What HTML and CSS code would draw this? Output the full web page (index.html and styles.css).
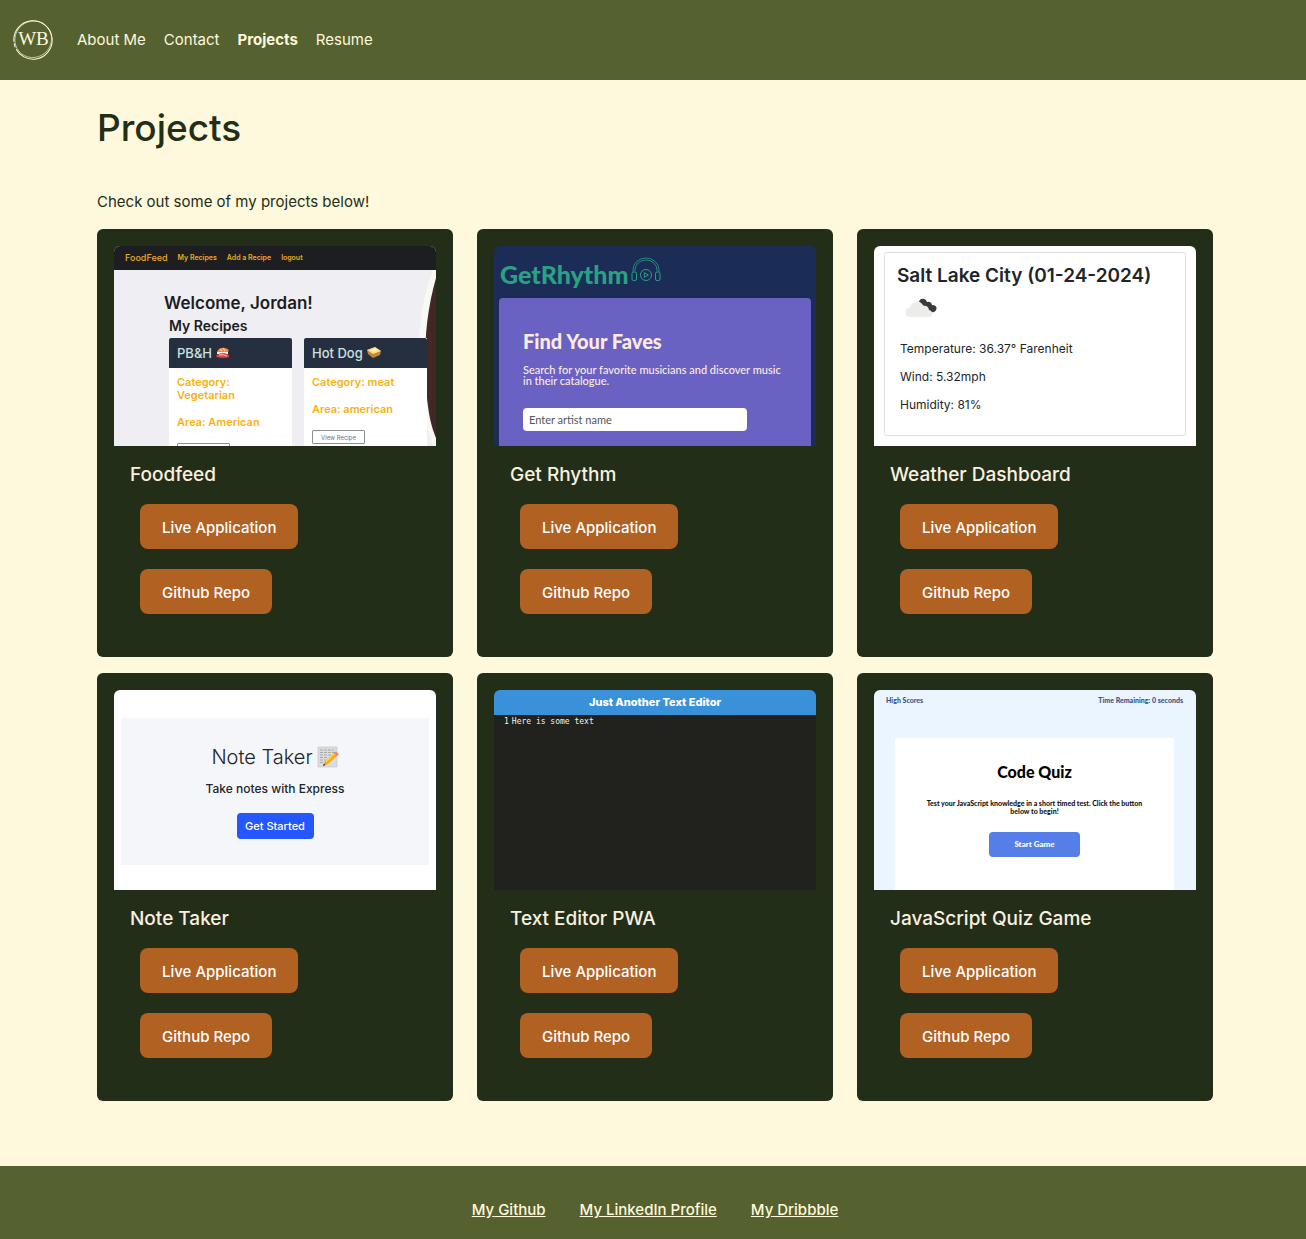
FILE: index.html
```html
<!DOCTYPE html>
<html lang="en">
<head>
<meta charset="utf-8">
<meta name="viewport" content="width=device-width, initial-scale=1">
<title>Projects</title>
<link rel="stylesheet" href="styles.css">
</head>
<body>
<header class="navbar">
  <a class="brand" href="#" aria-label="Home">
    <svg class="logo" viewBox="0 0 40 40" fill="none" stroke="currentColor">
      <circle cx="20" cy="20" r="19.2" stroke-width="1" stroke-dasharray="112 2 4 3" transform="rotate(175 20 20)"/>
      <ellipse cx="20.6" cy="19.6" rx="18.6" ry="18" stroke-width=".6" transform="rotate(-40 20 20)"/>
      <text x="20.500" y="25" text-anchor="middle" fill="currentColor" stroke="none" class="logo-text">WB</text>
    </svg>
  </a>
  <nav class="nav">
    <a href="#about">About Me</a>
    <a href="#contact">Contact</a>
    <a href="#projects" class="active">Projects</a>
    <a href="#resume">Resume</a>
  </nav>
</header>

<main class="container">
  <h1>Projects</h1>
  <p class="intro">Check out some of my projects below!</p>
  <div class="grid">

    <article class="card">
      <div class="shot food">
        <div class="food-nav"><b>FoodFeed</b><span>My Recipes</span><span>Add a Recipe</span><span>logout</span></div>
        <div class="food-page">
          <svg class="food-cup" viewBox="0 0 40 176" preserveAspectRatio="none">
            <path d="M34 0C8 32 2 72 8 112C14 146 24 164 36 176H40V0Z" fill="#f8f9f4"/>
            <path d="M40 8C24 36 17 64 18 100C22 142 30 156 40 168Z" fill="#432724"/>
          </svg>
          <div class="food-title">Welcome, Jordan!</div>
          <div class="food-sub">My Recipes</div>
          <div class="food-cards">
            <div class="recipe">
              <div class="recipe-head">PB&amp;H
                <svg viewBox="0 0 14 12"><path d="M1 5Q3 0 9 1Q14 2 12 5Z" fill="#f08a4a"/><path d="M4 2l2 2M7 1l2 3" stroke="#ffd9b8"/><path d="M1 5h11v2H1z" fill="#f4eee8"/><path d="M0 9Q2 6 8 6Q14 7 13 10Q7 12 1 10Z" fill="#e0434b"/><path d="M3 8q5-1 8 1" stroke="#ffc4bd" fill="none"/></svg>
              </div>
              <div class="recipe-body"><p>Category:<br>Vegetarian</p><p>Area: American</p><button type="button" aria-label="View Recipe"></button></div>
            </div>
            <div class="recipe">
              <div class="recipe-head">Hot Dog
                <svg viewBox="0 0 14 12"><path d="M0 3L8 0L14 4L13 8L6 11L1 7Z" fill="#c98532"/><path d="M0 3L8 0L14 4L6 7Z" fill="#f7dc8b"/><path d="M3 3l5-2 3 2-5 2z" fill="#fff2b4"/></svg>
              </div>
              <div class="recipe-body"><p>Category: meat</p><p>Area: american</p><button type="button">View Recipe</button></div>
            </div>
          </div>
        </div>
      </div>
      <div class="card-body">
        <h2>Foodfeed</h2>
        <a class="btn" href="#">Live Application</a>
        <a class="btn" href="#">Github Repo</a>
      </div>
    </article>

    <article class="card">
      <div class="shot rhythm">
        <div class="rhythm-logo">GetRhythm
          <svg viewBox="0 0 30 30" fill="none" stroke="currentColor">
            <path d="M2 15V13A13 12 0 0 1 28 13V15M4 14V13A11 10 0 0 1 26 13V14" stroke-width=".8"/>
            <rect x="1" y="15" width="4.500" height="8.500" rx="1.500"/><rect x="24.500" y="15" width="4.500" height="8.500" rx="1.500"/>
            <circle cx="15" cy="18" r="5.500"/><path d="M13.300 15.700L17.500 18L13.300 20.300Z"/>
          </svg>
        </div>
        <div class="rhythm-panel">
          <div class="rhythm-title">Find Your Faves</div>
          <p>Search for your favorite musicians and discover music in their catalogue.</p>
          <input type="text" placeholder="Enter artist name" aria-label="Artist name">
        </div>
      </div>
      <div class="card-body">
        <h2>Get Rhythm</h2>
        <a class="btn" href="#">Live Application</a>
        <a class="btn" href="#">Github Repo</a>
      </div>
    </article>

    <article class="card">
      <div class="shot weather">
        <div class="weather-box">
          <div class="weather-title">Salt Lake City (01-24-2024)</div>
          <svg viewBox="0 0 32 20"><path d="M14 4Q15 0 19 1Q21 1 22 4Q26 3 27 7Q32 7 31.500 11Q30 15 26 14L19 8Z" fill="#3b3b3c"/><path d="M5 19Q0 18 .5 14Q1 10 5 10Q6 4 11 4Q16 3 18 8Q23 7 24 12Q28 13 27 17Q26 19 24 19Z" fill="#ececeb"/></svg>
          <p>Temperature: 36.37° Farenheit</p>
          <p>Wind: 5.32mph</p>
          <p>Humidity: 81%</p>
        </div>
      </div>
      <div class="card-body">
        <h2>Weather Dashboard</h2>
        <a class="btn" href="#">Live Application</a>
        <a class="btn" href="#">Github Repo</a>
      </div>
    </article>

    <article class="card">
      <div class="shot notes">
        <div class="notes-box">
          <div class="notes-title">Note Taker
            <svg viewBox="0 0 22 22"><path d="M1 1H20V21H1Z" fill="#dcdcdc" stroke="#c4c4c4" stroke-width=".6"/><path d="M3 4h14M3 6.500h15M3 9h11M3 11.500h8M3 14h6M3 16.500h4" stroke="#9a9a9a" stroke-width=".8" stroke-dasharray="3 1"/><path d="M6 20L8 15L17 7L20 10L11 18Z" fill="#f2ac1d"/><path d="M8 15L17 7L18 8L9.500 16Z" fill="#ffd34d"/><path d="M17 7L19 5.500L22 8.500L20 10Z" fill="#ee7f8c"/><path d="M6 20L7 17.500L8.500 19Z" fill="#333"/></svg>
          </div>
          <p>Take notes with Express</p>
          <button type="button">Get Started</button>
        </div>
      </div>
      <div class="card-body">
        <h2>Note Taker</h2>
        <a class="btn" href="#">Live Application</a>
        <a class="btn" href="#">Github Repo</a>
      </div>
    </article>

    <article class="card">
      <div class="shot editor">
        <div class="editor-bar">Just Another Text Editor</div>
        <div class="editor-line"><span>1</span><code>Here is some text</code></div>
      </div>
      <div class="card-body">
        <h2>Text Editor PWA</h2>
        <a class="btn" href="#">Live Application</a>
        <a class="btn" href="#">Github Repo</a>
      </div>
    </article>

    <article class="card">
      <div class="shot quiz">
        <div class="quiz-top"><span>High Scores</span><span>Time Remaining: 0 seconds</span></div>
        <div class="quiz-box">
          <div class="quiz-title">Code Quiz</div>
          <p>Test your JavaScript knowledge in a short timed test. Click the button below to begin!</p>
          <button type="button">Start Game</button>
        </div>
      </div>
      <div class="card-body">
        <h2>JavaScript Quiz Game</h2>
        <a class="btn" href="#">Live Application</a>
        <a class="btn" href="#">Github Repo</a>
      </div>
    </article>

  </div>
</main>

<footer class="footer">
  <a href="#">My Github</a>
  <a href="#">My LinkedIn Profile</a>
  <a href="#">My Dribbble</a>
</footer>
</body>
</html>
```

FILE: styles.css
```css
*, *::before, *::after { box-sizing: border-box; }

:root {
  --cream: #fef8dc;
  --olive: #55612f;
  --forest: #232e18;
  --rust: #b16122;
}

body {
  margin: 0;
  min-height: 100vh;
  display: flex;
  flex-direction: column;
  background: var(--cream);
  color: var(--forest);
  font: 400 15px/24px Inter, "Liberation Sans", sans-serif;
}

p { margin: 0; }
a { color: inherit; }

/* Top bar */
.navbar {
  display: flex;
  align-items: center;
  gap: 24px;
  height: 80px;
  padding: 0 13px 1px;
  background: var(--olive);
  color: var(--cream);
}
.brand { display: flex; }
.logo { width: 40px; height: 40px; }
.logo-text { font: 400 19px "Liberation Serif", serif; }
.nav { display: flex; gap: 18px; }
.nav a { text-decoration: none; }
.nav .active { font-weight: 700; }

/* Page */
.container {
  flex: 1;
  width: 100%;
  max-width: 1144px;
  margin: 0 auto;
  padding: 24px 12px 64px 16px;
}
h1 {
  margin: 0 0 38px;
  font-size: 37px;
  line-height: 48px;
  font-weight: 500;
}
.intro { margin: 0 0 15px; }
.grid {
  display: grid;
  grid-template-columns: repeat(auto-fill, minmax(320px, 1fr));
  gap: 16px 24px;
}

/* Project card */
.card {
  padding: 17px;
  border-radius: 6px;
  background: var(--forest);
  color: #faf0e0;
}
.card-body {
  display: flex;
  flex-direction: column;
  align-items: flex-start;
  gap: 20px;
  padding: 17px 16px 26px;
}
.card-body h2 {
  margin: 0 0 -3px;
  font-size: 19px;
  line-height: 24px;
  font-weight: 500;
}
.btn {
  margin-left: 10px;
  padding: 11px 22px 9px;
  border-radius: 8px;
  background: var(--rust);
  color: #fff;
  font-weight: 500;
  line-height: 25px;
  text-decoration: none;
}

/* Footer */
.footer {
  display: flex;
  justify-content: center;
  flex-wrap: wrap;
  gap: 34px;
  padding: 32px 0 17px 4px;
  background: var(--olive);
  color: var(--cream);
  font-weight: 500;
}

/* Project previews */
.shot {
  height: 200px;
  overflow: hidden;
  border-radius: 6px 6px 0 0;
}
.shot button, .shot input { font-family: inherit; }

/* FoodFeed */
.food { background: #efeef3; color: #1c1d22; }
.food-nav {
  display: flex;
  align-items: center;
  height: 24px;
  padding-left: 11px;
  gap: 10px;
  background: #1d1e22;
  color: #efa91c;
  font-size: 7px;
  font-weight: 600;
}
.food-nav b { font-size: 9px; font-weight: 500; }
.food-page { position: relative; padding: 22px 9px 0 50px; }
.food-cup { position: absolute; right: 0; top: 0; width: 20px; height: 176px; }
.food-title { font-size: 17px; font-weight: 600; line-height: 22px; }
.food-sub { padding-left: 5px; font-size: 14px; font-weight: 600; line-height: 24px; }
.food-cards {
  position: relative;
  display: grid;
  grid-template-columns: 1fr 1fr;
  gap: 12px;
  padding-left: 5px;
}
.recipe { background: #fff; }
.recipe-head {
  display: flex;
  align-items: center;
  gap: 4px;
  height: 30px;
  padding-left: 8px;
  border-radius: 2px 2px 0 0;
  background: #262f3f;
  color: #cfe0e0;
  font-size: 13px;
  font-weight: 500;
}
.recipe-head svg { width: 14px; height: 12px; }
.recipe-body {
  padding: 8px 8px 0;
  color: #f9b110;
  font-size: 11px;
  font-weight: 600;
  line-height: 13px;
}
.recipe-body p { margin-bottom: 14px; }
.recipe-body button {
  display: block;
  width: 53px;
  height: 14px;
  padding: 0;
  border: 1px solid #8b8f94;
  border-radius: 1px;
  background: #fff;
  color: #6c7278;
  font-size: 6px;
}

/* Get Rhythm */
.rhythm {
  padding: 11px 5px 0;
  background: #1b2c56;
  font-family: Lato, sans-serif;
}
.rhythm-logo {
  display: flex;
  align-items: center;
  gap: 2px;
  height: 41px;
  padding: 0 0 8px 1px;
  color: #2aa183;
  font-size: 25px;
  font-weight: 900;
}
.rhythm-logo svg { width: 30px; height: 30px; margin-bottom: 4px; }
.rhythm-panel {
  height: 160px;
  padding: 31px 24px 0;
  border-radius: 4px;
  background: #6a62c3;
  color: #fdeade;
}
.rhythm-title { font-size: 20px; font-weight: 900; line-height: 24px; }
.rhythm-panel p { margin: 11px 0 22px; font-size: 11px; font-weight: 500; line-height: 11px; }
.rhythm-panel input {
  display: block;
  width: 85%;
  height: 23px;
  padding: 0 6px;
  border: 0;
  border-radius: 4px;
  background: #fff;
  font-size: 11px;
}
.rhythm-panel input::placeholder { color: #555; }

/* Weather */
.weather { padding: 6px 10px 10px; background: #fff; color: #212529; }
.weather-box {
  height: 100%;
  padding: 10px 12px;
  border: 1px solid #dedfe0;
  border-radius: 3px;
}
.weather-title { font-size: 19px; font-weight: 600; line-height: 26px; white-space: nowrap; }
.weather-box svg { display: block; width: 32px; height: 20px; margin: 9px 0 17px 8px; }
.weather-box p { padding-left: 3px; font-size: 12px; line-height: 28px; }

/* Note Taker */
.notes { padding: 28px 7px; background: #fff; color: #212529; }
.notes-box {
  display: flex;
  flex-direction: column;
  align-items: center;
  height: 147px;
  padding-top: 24px;
  background: #f5f6f9;
}
.notes-title { display: flex; align-items: center; gap: 4px; font-size: 20px; font-weight: 300; line-height: 30px; }
.notes-title svg { width: 22px; height: 22px; }
.notes-box p { margin: 5px 0 12px; font-size: 12px; font-weight: 500; }
.notes-box button {
  width: 77px;
  height: 26px;
  padding: 0;
  border: 0;
  border-radius: 4px;
  background: #2457ff;
  color: #fff;
  font-size: 11px;
  font-weight: 500;
}

/* Text editor */
.editor { background: #21211d; color: #f4f4ee; }
.editor-bar {
  height: 25px;
  background: #3992d9;
  color: #fff;
  font-size: 11px;
  font-weight: 800;
  text-align: center;
}
.editor-line {
  display: flex;
  gap: 3px;
  padding: 1px 10px;
  font: 8px/12px "DejaVu Sans Mono", monospace;
}
.editor-line code { font: inherit; }

/* Code quiz */
.quiz {
  padding: 0 22px 0 21px;
  background: #ebf5ff;
  color: #111;
  font-family: Lato, sans-serif;
  font-weight: 900;
}
.quiz-top {
  display: flex;
  justify-content: space-between;
  height: 48px;
  margin: 0 -9px;
  color: #355486;
  font-size: 7px;
  line-height: 20px;
}
.quiz-box { height: 160px; padding: 24px 28px 0; border-radius: 2px; background: #fff; text-align: center; }
.quiz-title { color: #000; font-size: 16px; line-height: 20px; }
.quiz-box p { margin: 17px 0 14px; font-size: 7px; line-height: 8px; font-weight: 900; }
.quiz-box button {
  width: 91px;
  height: 25px;
  padding: 0;
  border: 0;
  border-radius: 4px;
  background: #557ee8;
  color: #fff;
  font-size: 8px;
  font-weight: 900;
}
```
